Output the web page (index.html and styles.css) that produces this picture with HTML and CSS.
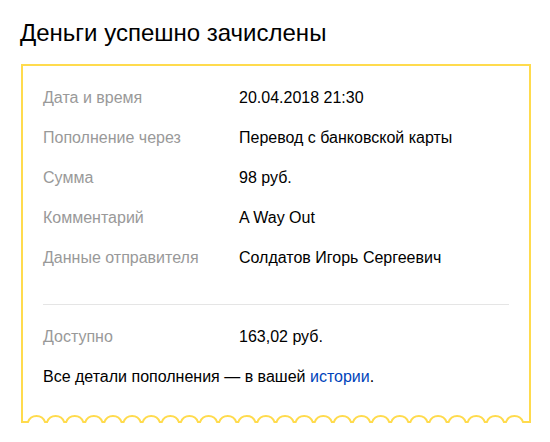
FILE: index.html
```html
<!DOCTYPE html>
<html lang="ru">
<head>
<meta charset="utf-8">
<title>Деньги успешно зачислены</title>
<link rel="stylesheet" href="styles.css">
</head>
<body>
<div class="page">
  <h1 class="title">Деньги успешно зачислены</h1>
  <div class="receipt">
    <div class="card">
      <dl class="details">
        <div class="row"><dt class="label">Дата и время</dt><dd class="value">20.04.2018 21:30</dd></div>
        <div class="row"><dt class="label">Пополнение через</dt><dd class="value">Перевод с банковской карты</dd></div>
        <div class="row"><dt class="label">Сумма</dt><dd class="value">98 руб.</dd></div>
        <div class="row"><dt class="label">Комментарий</dt><dd class="value">A Way Out</dd></div>
        <div class="row"><dt class="label">Данные отправителя</dt><dd class="value">Солдатов Игорь Сергеевич</dd></div>
      </dl>
      <hr class="divider">
      <dl class="details">
        <div class="row"><dt class="label">Доступно</dt><dd class="value">163,02 руб.</dd></div>
      </dl>
      <p class="note">Все детали пополнения — в вашей <a class="link" href="#">истории</a>.</p>
    </div>
    <svg class="edge" width="510" height="10" viewBox="0 0 510 10" aria-hidden="true">
      <path fill="none" stroke="#ffdb4d" stroke-width="2" d="M1 0 V9 H7
        a9.02 9.02 0 0 1 17 0 h2.12 a9.02 9.02 0 0 1 17 0 h2.12 a9.02 9.02 0 0 1 17 0 h2.12 a9.02 9.02 0 0 1 17 0 h2.12
        a9.02 9.02 0 0 1 17 0 h2.12 a9.02 9.02 0 0 1 17 0 h2.12 a9.02 9.02 0 0 1 17 0 h2.12 a9.02 9.02 0 0 1 17 0 h2.12
        a9.02 9.02 0 0 1 17 0 h2.12 a9.02 9.02 0 0 1 17 0 h2.12 a9.02 9.02 0 0 1 17 0 h2.12 a9.02 9.02 0 0 1 17 0 h2.12
        a9.02 9.02 0 0 1 17 0 h2.12 a9.02 9.02 0 0 1 17 0 h2.12 a9.02 9.02 0 0 1 17 0 h2.12 a9.02 9.02 0 0 1 17 0 h2.12
        a9.02 9.02 0 0 1 17 0 h2.12 a9.02 9.02 0 0 1 17 0 h2.12 a9.02 9.02 0 0 1 17 0 h2.12 a9.02 9.02 0 0 1 17 0 h2.12
        a9.02 9.02 0 0 1 17 0 h2.12 a9.02 9.02 0 0 1 17 0 h2.12 a9.02 9.02 0 0 1 17 0 h2.12 a9.02 9.02 0 0 1 17 0 h2.12
        a9.02 9.02 0 0 1 17 0 h2.12 a9.02 9.02 0 0 1 17 0
        H509 V0"/>
    </svg>
  </div>
</div>
</body>
</html>
```

FILE: styles.css
```css
html, body {
  margin: 0;
  padding: 0;
  background: #fff;
}

body {
  font-family: "Liberation Sans", Arial, sans-serif;
  color: #000;
}

.page {
  padding: 19px 19px 0 21px;
}

.title {
  margin: 0 0 17px -1px;
  font-size: 24px;
  line-height: 28px;
  font-weight: normal;
}

.receipt {
  width: 510px;
}

.card {
  border: 2px solid #ffdb4d;
  border-bottom: 0;
  padding: 22px 20px 26px;
}

.details {
  margin: 0;
  display: flex;
  flex-direction: column;
  gap: 20px;
}

.row {
  display: grid;
  grid-template-columns: 196px 1fr;
  font-size: 16px;
  line-height: 20px;
}

.label {
  color: #999;
}

.value {
  margin: 0;
}

.divider {
  border: 0;
  border-top: 1px solid #e5e5e5;
  margin: 36px 0 22px;
  height: 0;
}

.note {
  margin: 20px 0 0;
  font-size: 16px;
  line-height: 20px;
}

.link {
  color: #04b;
  text-decoration: none;
}

.edge {
  display: block;
}
```
